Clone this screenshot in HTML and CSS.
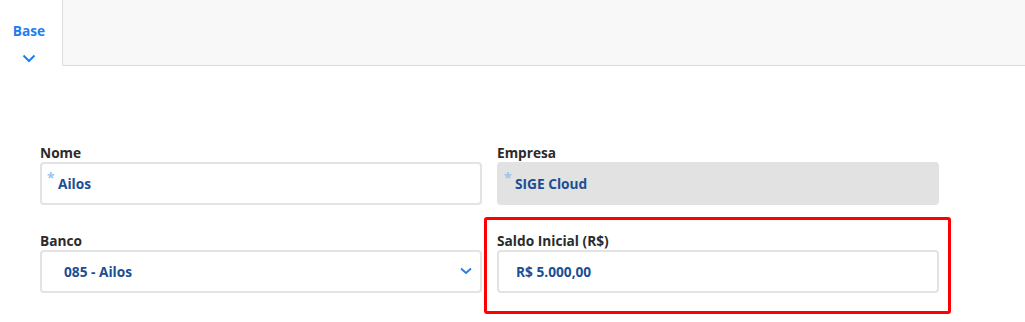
FILE: index.html
```html
<!DOCTYPE html>
<html lang="pt-BR">
<head>
    <meta charset="UTF-8">
    <title>Conta bancária</title>
    <link rel="stylesheet" href="styles.css">
</head>
<body>

<div class="tabs">
    <div class="tab active">
        <span class="tab-label">Base</span>
        <svg class="tab-chevron" width="14" height="9" viewBox="0 0 14 9"><path d="M1.5 1.5 L7 7 L12.5 1.5" fill="none" stroke="#1e7ef0" stroke-width="2"/></svg>
    </div>
    <div class="tab-fill"></div>
</div>

<div class="form">
    <div class="field">
        <label>Nome</label>
        <div class="input">
            <span class="req">*</span>
            <span class="value">Ailos</span>
        </div>
    </div>
    <div class="field">
        <label>Empresa</label>
        <div class="input disabled">
            <span class="req">*</span>
            <span class="value">SIGE Cloud</span>
        </div>
    </div>
    <div class="field">
        <label>Banco</label>
        <div class="input select">
            <span class="value">085 - Ailos</span>
            <svg class="select-chevron" width="12" height="8" viewBox="0 0 12 8"><path d="M1 1.5 L6 6 L11 1.5" fill="none" stroke="#2a7de1" stroke-width="1.8"/></svg>
        </div>
    </div>
    <div class="field highlight">
        <label>Saldo Inicial (R$)</label>
        <div class="input money">
            <span class="value">R$ 5.000,00</span>
        </div>
    </div>
</div>

</body>
</html>
```

FILE: styles.css
```css
body {
    margin: 0;
    font-family: "Open Sans", Arial, sans-serif;
    background: #ffffff;
}
.tabs {
    display: flex;
    height: 66px;
}
.tab {
    width: 63px;
    border-right: 1px solid #dddddd;
    display: flex;
    flex-direction: column;
    align-items: center;
    padding-top: 22px;
    box-sizing: border-box;
}
.tab-label {
    color: #1e7ef0;
    font-weight: 700;
    font-size: 13.7px;
    line-height: 18px;
    margin-left: -4px;
}
.tab-chevron {
    margin-top: 14px;
    margin-left: -4px;
}
.tab-fill {
    flex: 1;
    background: #f8f8f8;
    border-bottom: 1px solid #dddddd;
}
.form {
    display: grid;
    grid-template-columns: 442px 442px;
    column-gap: 15px;
    row-gap: 27px;
    padding: 78px 0 29px 40px;
}
.field {
    position: relative;
}
.field label {
    display: block;
    font-size: 13.7px;
    font-weight: 700;
    color: #2b2b2b;
    line-height: 18px;
}
.input {
    position: relative;
    height: 43px;
    border: 2px solid #e3e3e3;
    border-radius: 4px;
    box-sizing: border-box;
    display: flex;
    align-items: center;
    padding-left: 16px;
    padding-bottom: 1px;
}
.input.disabled {
    background: #e2e2e2;
    border-color: #e2e2e2;
}
.req {
    position: absolute;
    left: 5px;
    top: 4px;
    color: #9cc3ef;
    font-size: 14px;
    font-weight: 700;
}
.value {
    color: #1b4e92;
    font-size: 13.7px;
    font-weight: 700;
}
.select {
    padding-left: 22px;
}
.money {
    padding-left: 17px;
}
.select-chevron {
    margin-left: auto;
    margin-right: 8px;
}
.highlight::after {
    content: "";
    position: absolute;
    top: -15px;
    left: -13px;
    right: -12px;
    bottom: -21px;
    border: 3px solid #ff0000;
    border-radius: 3px;
}
```
